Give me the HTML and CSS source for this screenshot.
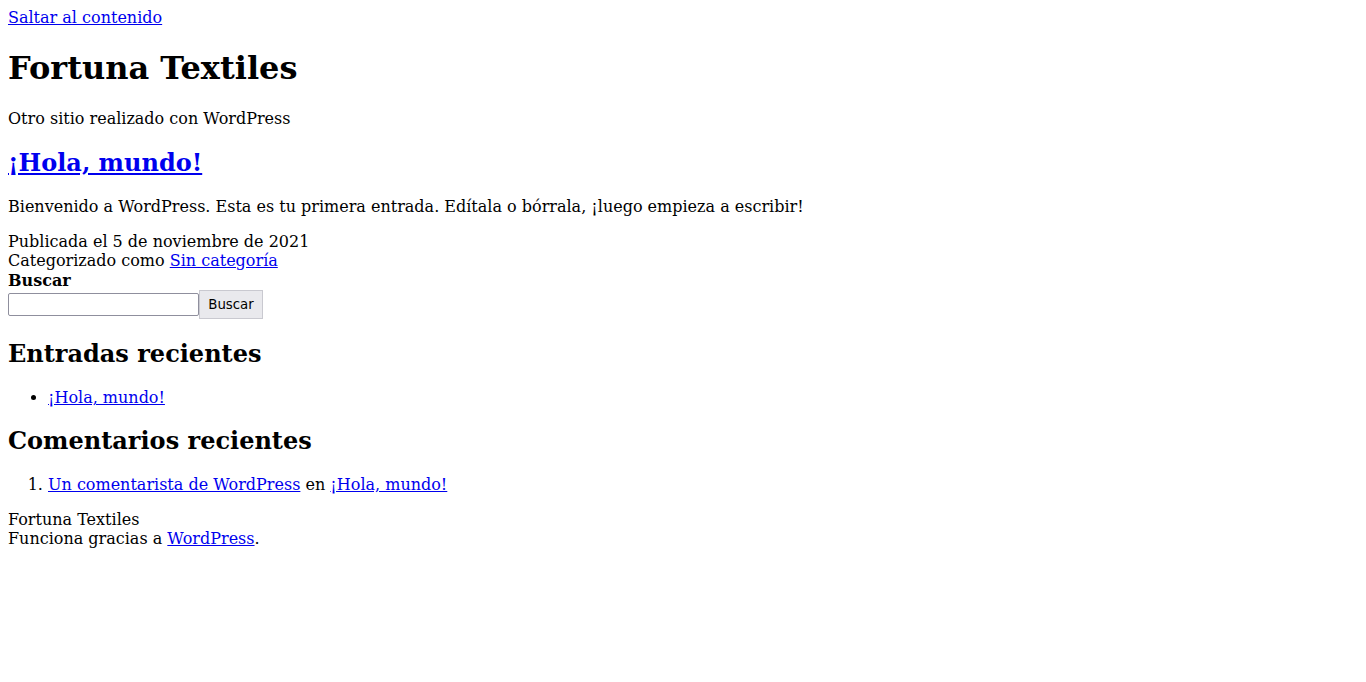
FILE: index.html
```html
<!DOCTYPE html>
<html lang="es">
<head>
<meta charset="utf-8">
<title>Fortuna Textiles</title>
<link rel="stylesheet" href="styles.css">
</head>
<body>
<a class="skip-link" href="#content">Saltar al contenido</a>
<header class="site-header">
  <h1 class="site-title">Fortuna Textiles</h1>
  <p class="site-description">Otro sitio realizado con WordPress</p>
</header>
<main id="content">
  <article>
    <header><h2 class="entry-title"><a href="#">¡Hola, mundo!</a></h2></header>
    <div class="entry-content"><p>Bienvenido a WordPress. Esta es tu primera entrada. Edítala o bórrala, ¡luego empieza a escribir!</p></div>
    <footer class="entry-footer">
      <div>Publicada el 5 de noviembre de 2021</div>
      <div>Categorizado como <a href="#">Sin categoría</a></div>
    </footer>
  </article>
</main>
<aside class="widgets">
  <form class="search">
    <label class="search-label" for="s">Buscar</label>
    <div class="search-row">
      <input id="s" class="search-input" type="search">
      <button class="search-button" type="button">Buscar</button>
    </div>
  </form>
  <h2>Entradas recientes</h2>
  <ul><li><a href="#">¡Hola, mundo!</a></li></ul>
  <h2 class="comments-title">Comentarios recientes</h2>
  <ol><li><a href="#">Un comentarista de WordPress</a> en <a href="#">¡Hola, mundo!</a></li></ol>
</aside>
<footer class="site-footer">
  <div>Fortuna Textiles</div>
  <div>Funciona gracias a <a href="#">WordPress</a>.</div>
</footer>
</body>
</html>
```
FILE: styles.css
```css
body {
  margin: 8px;
  font-family: "DejaVu Serif", serif;
  font-size: 16px;
  color: #000;
  background: #fff;
}
a { color: #0000ee; }
.site-title { font-size: 32px; margin: 22px 0; }
.entry-title { font-size: 24px; margin: 20px 0; }
.entry-content p { margin: 16px 0; }
.search { padding-top: 1px; }
.search-label { display: block; font-weight: bold; }
.search-row { display: flex; align-items: center; }
.search-input {
  width: 191px;
  height: 23px;
  box-sizing: border-box;
  margin: 0;
  border: 1px solid #8f8f9d;
  border-radius: 2px;
  padding: 1px 2px;
}
.search-button {
  height: 29px;
  width: 64px;
  box-sizing: border-box;
  margin: 0;
  font-family: "DejaVu Sans", sans-serif;
  font-size: 13.33px;
  background: #e9e9ed;
  border: 1px solid #c9c9d0;
  border-radius: 0;
  color: #000;
}
.widgets h2 { font-size: 24px; margin: 20px 0; }
.widgets h2.comments-title { margin-top: 19px; }
.widgets ul, .widgets ol { padding-left: 40px; margin: 16px 0; }
```
